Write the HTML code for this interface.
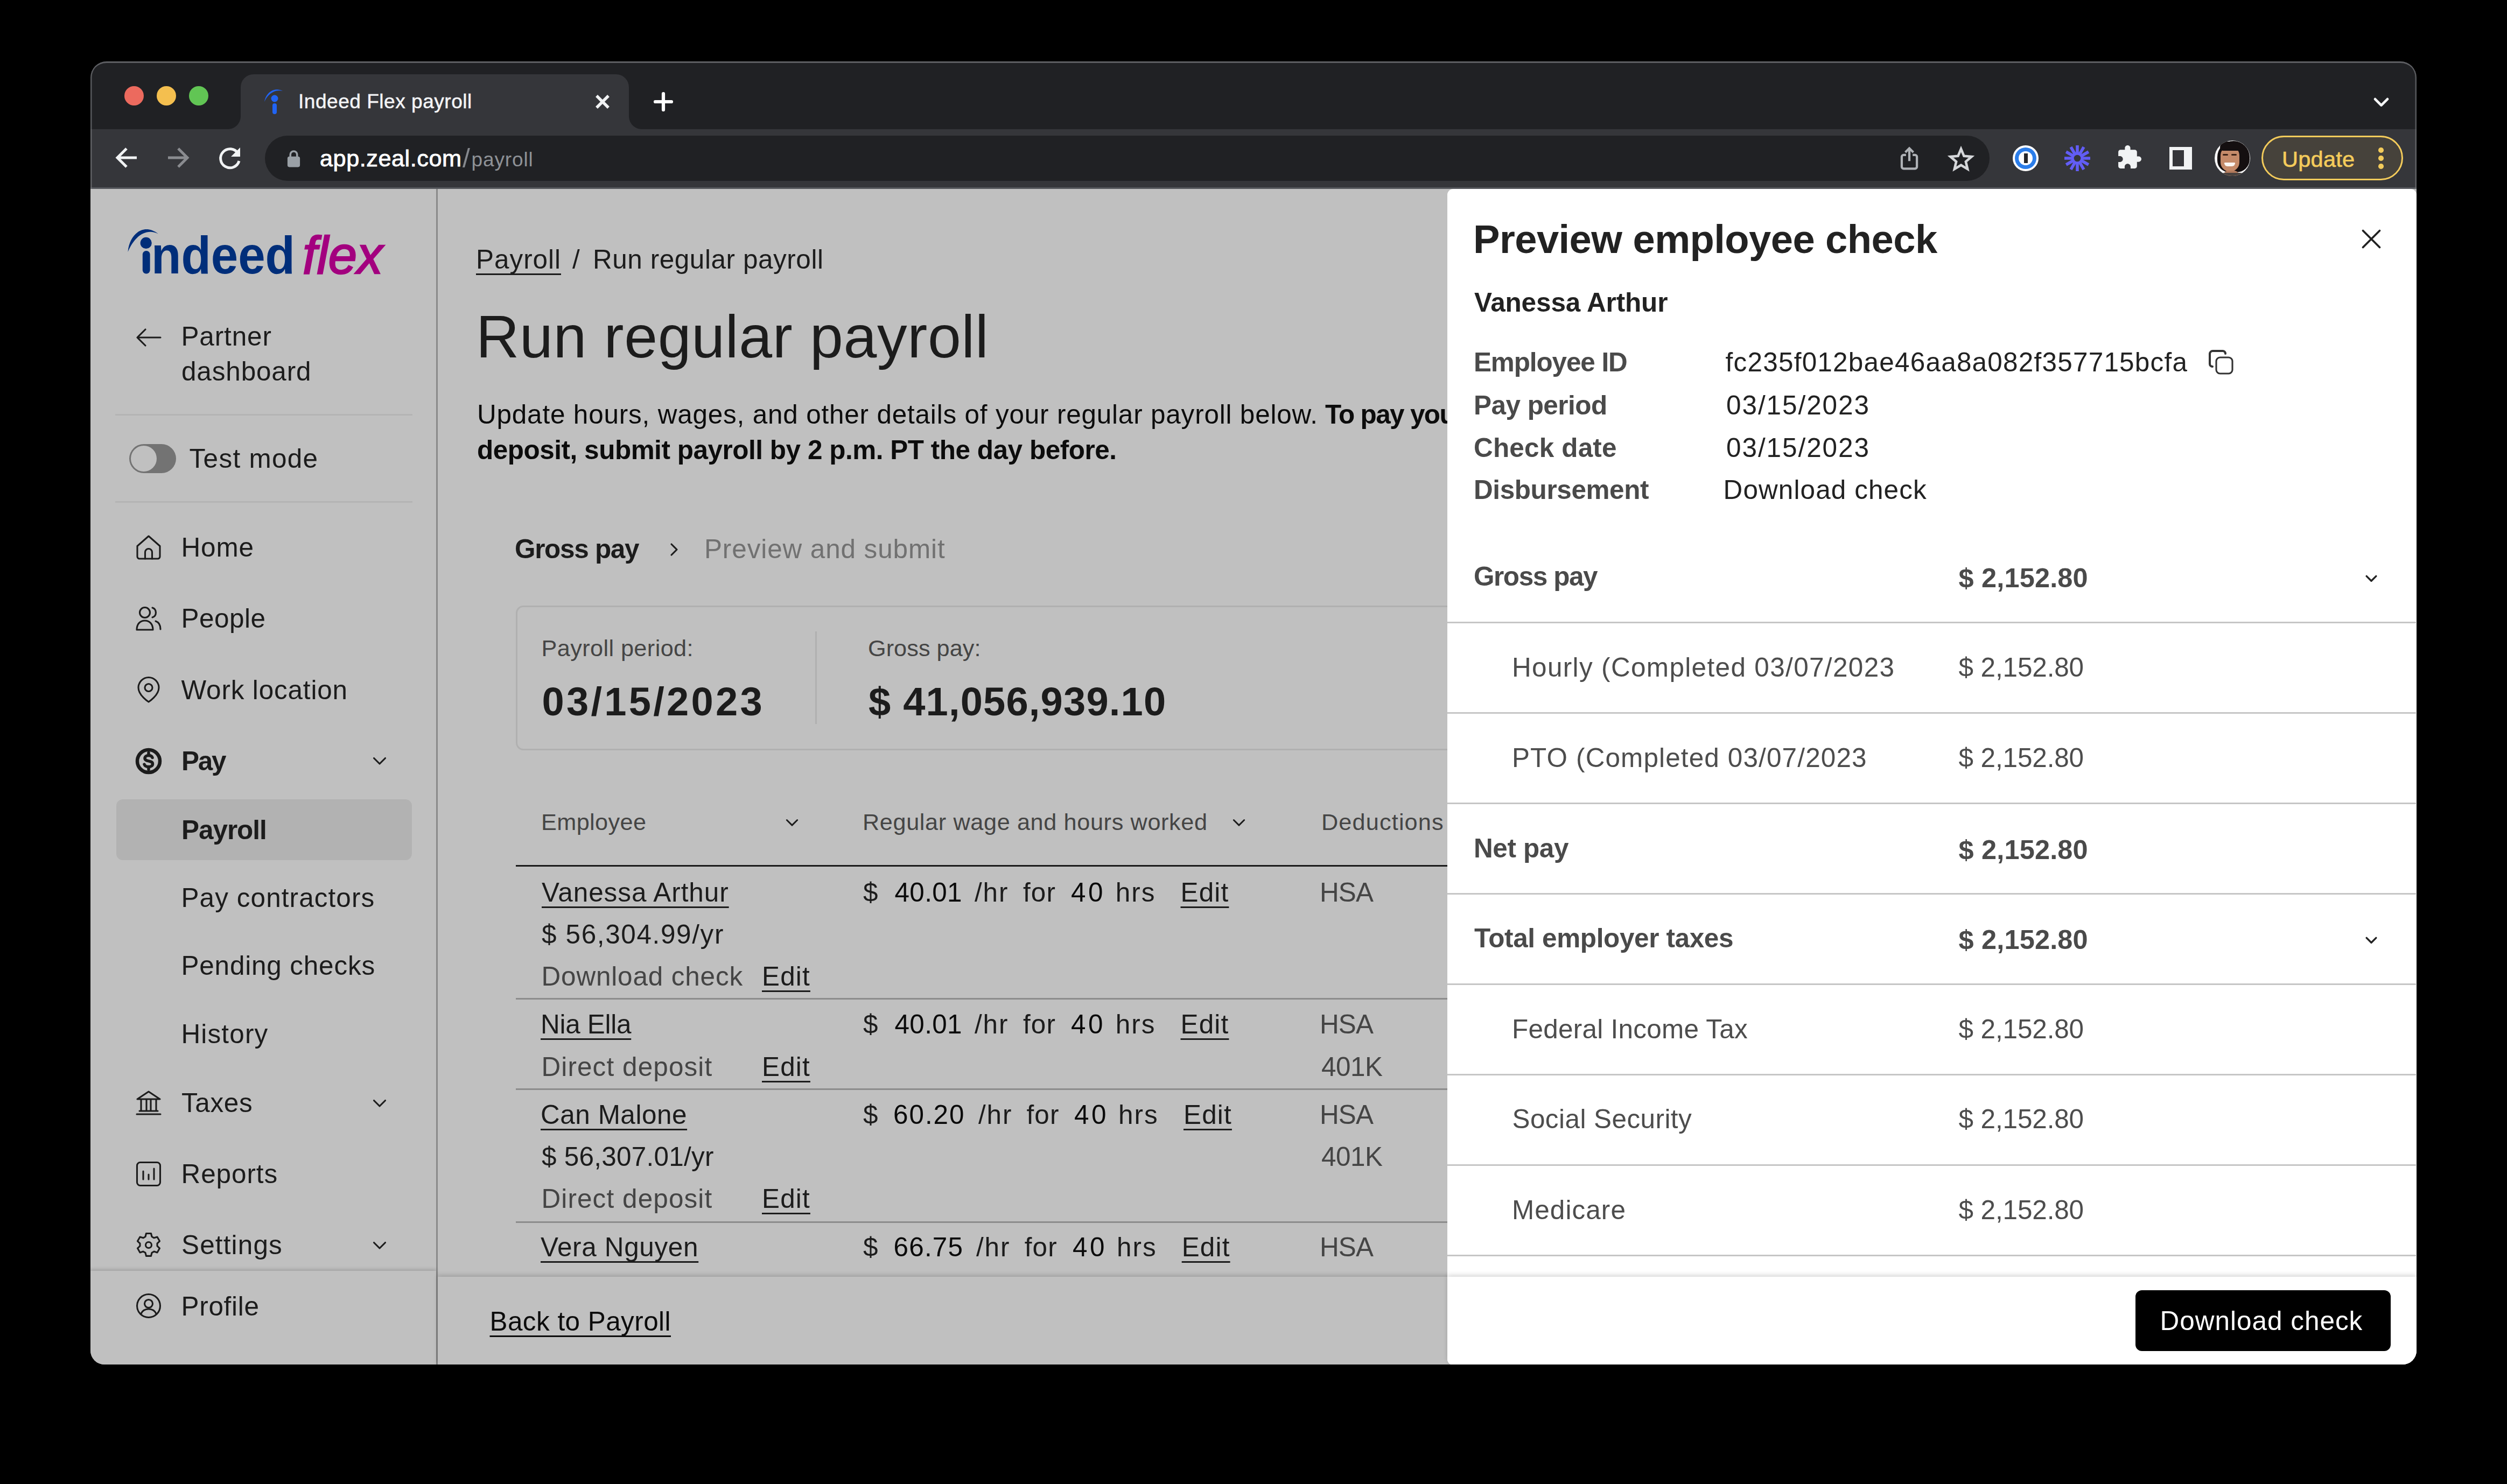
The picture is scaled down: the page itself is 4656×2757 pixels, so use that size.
<!DOCTYPE html>
<html><head><meta charset="utf-8"><title>Indeed Flex payroll</title>
<style>
*{box-sizing:border-box;margin:0;padding:0}
html,body{width:4656px;height:2757px;background:#000;overflow:hidden}
body{font-family:"Liberation Sans",sans-serif;position:relative}
#win{position:absolute;left:0;top:0;width:4656px;height:2757px;clip-path:inset(114px 168px 222px 168px round 30px 30px 26px 26px)}
#win>*{position:absolute}
.t{position:absolute;white-space:nowrap;line-height:1;z-index:10}
.a{position:absolute}
.ln{position:absolute;z-index:5}
svg{position:absolute;overflow:visible}
.ic{fill:none;stroke:#1c1c1c;stroke-width:3.1;stroke-linecap:round;stroke-linejoin:round}

</style></head>
<body>
<div id="win">
<!-- ============ browser chrome ============ -->
<div class="a" style="left:168px;top:114px;width:4320px;height:126px;background:#202124"></div>
<div class="a" style="left:168px;top:240px;width:4320px;height:108px;background:#35363a"></div>
<div class="a" style="left:168px;top:348px;width:4320px;height:3px;background:#55575c"></div>
<!-- active tab -->
<div class="a" style="left:447px;top:138px;width:721px;height:102px;background:#35363a;border-radius:24px 24px 0 0"></div>
<div class="a" style="left:423px;top:216px;width:24px;height:24px;background:radial-gradient(circle at 0 0,#202124 23.5px,#35363a 24.5px)"></div>
<div class="a" style="left:1168px;top:216px;width:24px;height:24px;background:radial-gradient(circle at 100% 0,#202124 23.5px,#35363a 24.5px)"></div>
<!-- traffic lights -->
<div class="a" style="left:231px;top:160px;width:36px;height:36px;border-radius:50%;background:#ec6a5e"></div>
<div class="a" style="left:291px;top:160px;width:36px;height:36px;border-radius:50%;background:#f4bf4f"></div>
<div class="a" style="left:351px;top:160px;width:36px;height:36px;border-radius:50%;background:#61c554"></div>
<!-- favicon -->
<svg style="left:486px;top:162px" width="48" height="56" viewBox="0 0 48 56">
  <path d="M5 27 C8 9 24 -1 39 7 C26 4 13 10 5 27Z" fill="#2164f3"/>
  <circle cx="24" cy="21" r="6.5" fill="#2164f3"/>
  <rect x="20" y="30" width="8" height="20" rx="4" fill="#2164f3"/>
</svg>
<!-- tab close / plus / chevron -->
<svg style="left:1105px;top:175px" width="28" height="28" viewBox="0 0 28 28"><path d="M3 3L25 25M25 3L3 25" stroke="#f1f3f4" stroke-width="5.400" fill="none"/></svg>
<svg style="left:1214px;top:171px" width="36" height="36" viewBox="0 0 36 36"><path d="M18 3V33M3 18H33" stroke="#fff" stroke-width="6.200" stroke-linecap="round" fill="none"/></svg>
<svg style="left:4408px;top:181px" width="29" height="19" viewBox="0 0 34 22"><path d="M3.500 3.500L17 17L30.500 3.500" stroke="#f4f5f6" stroke-width="5.500" stroke-linecap="round" stroke-linejoin="round" fill="none"/></svg>
<!-- nav arrows -->
<svg style="left:214px;top:274px" width="42" height="38" viewBox="0 0 42 38"><path d="M40 19H5M21 2L4 19L21 36" stroke="#f1f3f4" stroke-width="5" fill="none"/></svg>
<svg style="left:310px;top:274px" width="42" height="38" viewBox="0 0 42 38"><path d="M2 19H37M21 2L38 19L21 36" stroke="#8a8c90" stroke-width="5" fill="none"/></svg>
<svg style="left:405px;top:272px" width="44" height="44" viewBox="0 0 44 44"><path d="M37 13 A17.5 17.5 0 1 0 39 27" stroke="#f1f3f4" stroke-width="5" fill="none"/><path d="M41 2V19H24Z" fill="#f1f3f4"/></svg>
<!-- url bar -->
<div class="a" style="left:492px;top:252px;width:3203px;height:84px;border-radius:42px;background:#202124"></div>
<svg style="left:533px;top:279px" width="25" height="32.500" viewBox="0 0 28 36"><rect x="1" y="13" width="26" height="22" rx="4" fill="#9aa0a6"/><path d="M7 14V9a7 7 0 0 1 14 0V14" stroke="#9aa0a6" stroke-width="4" fill="none"/></svg>
<!-- share -->
<svg style="left:3529px;top:272px" width="34" height="44" viewBox="0 0 38 50"><path d="M12 18H7a4 4 0 0 0-4 4V43a4 4 0 0 0 4 4H31a4 4 0 0 0 4-4V22a4 4 0 0 0-4-4H26" stroke="#aeb1b5" stroke-width="4.800" fill="none"/><path d="M19 31V5M10.500 12.500L19 4L27.500 12.500" stroke="#aeb1b5" stroke-width="4.800" fill="none"/></svg>
<!-- star -->
<svg style="left:3620px;top:273px" width="44" height="42" viewBox="0 0 48 46"><path d="M24 4L30 18.500L45.500 19.800L33.700 30L37.300 45L24 37L10.700 45L14.300 30L2.500 19.800L18 18.500Z" stroke="#d5d7da" stroke-width="5" fill="none" stroke-linejoin="miter"/></svg>
<!-- 1password -->
<div class="a" style="left:3738px;top:270px;width:48px;height:48px;border-radius:50%;background:#fff"></div>
<div class="a" style="left:3742px;top:274px;width:40px;height:40px;border-radius:50%;background:#2b7de9"></div>
<div class="a" style="left:3749px;top:281px;width:26px;height:26px;border-radius:50%;background:#fff"></div>
<div class="a" style="left:3758.500px;top:285px;width:7px;height:18px;background:#26272b"></div>
<!-- loom-like asterisk -->
<svg style="left:3833px;top:269px" width="50" height="50" viewBox="-25 -25 50 50">
 <g stroke="#625df5" stroke-width="5.600" stroke-linecap="butt">
  <path d="M0-24V24M-24 0H24M-12-20.800L12 20.800M12-20.800L-12 20.800M-20.800-12L20.800 12M-20.800 12L20.800-12"/>
 </g>
 <circle r="10.500" fill="#625df5"/><circle r="6.300" fill="#35363a"/>
</svg>
<!-- puzzle -->
<svg style="left:3930px;top:268px" width="49" height="49" viewBox="0 0 24 24"><path d="M20.5 11H19V7c0-1.1-.9-2-2-2h-4V3.5C13 2.12 11.88 1 10.500 1S8 2.12 8 3.5V5H4c-1.1 0-1.99.9-1.990 2v3.8H3.500c1.490 0 2.700 1.210 2.700 2.700s-1.210 2.700-2.700 2.700H2V20c0 1.100.900 2 2 2h3.800v-1.500c0-1.490 1.210-2.700 2.700-2.700 1.490 0 2.700 1.210 2.700 2.700V22H17c1.100 0 2-.900 2-2v-4h1.500c1.380 0 2.500-1.120 2.500-2.500S21.880 11 20.500 11z" fill="#f1f3f4"/></svg>
<!-- side panel icon -->
<div class="a" style="left:4029px;top:273px;width:42px;height:42px;background:#f1f3f4"></div>
<div class="a" style="left:4035px;top:279px;width:21px;height:30px;background:#35363a"></div>
<!-- avatar -->
<div class="a" style="left:4113px;top:261px;width:66px;height:66px;border-radius:50%;background:#f7f7f7;overflow:hidden">
  <div class="a" style="left:5px;top:1px;width:60px;height:58px;border-radius:30px 30px 24px 22px;background:#140f10"></div>
  <div class="a" style="left:11px;top:11px;width:35px;height:47px;border-radius:17px 17px 18px 18px;background:#c48a69"></div>
  <div class="a" style="left:10px;top:2px;width:40px;height:17px;border-radius:20px 20px 12px 12px;background:#140f10"></div>
  <div class="a" style="left:15px;top:25px;width:10px;height:3px;background:#3d2418;border-radius:2px"></div>
  <div class="a" style="left:31px;top:25px;width:10px;height:3px;background:#3d2418;border-radius:2px"></div>
  <div class="a" style="left:18px;top:41px;width:20px;height:7px;border-radius:2px 2px 10px 10px;background:#fbf6f2"></div>
  <div class="a" style="left:16px;top:56px;width:30px;height:12px;border-radius:10px 10px 0 0;background:#b37a5c"></div>
  <div class="a" style="left:8px;top:60px;width:50px;height:10px;border-radius:14px 14px 0 0;background:#4a4340"></div>
</div>
<!-- update pill -->
<div class="a" style="left:4200px;top:252px;width:263px;height:83px;border-radius:42px;border:3px solid #f3cb5b;background:#46423b"></div>
<div class="a" style="left:4417px;top:274px;width:9.500px;height:9.500px;border-radius:50%;background:#f3cb5b"></div>
<div class="a" style="left:4417px;top:289px;width:9.500px;height:9.500px;border-radius:50%;background:#f3cb5b"></div>
<div class="a" style="left:4417px;top:304px;width:9.500px;height:9.500px;border-radius:50%;background:#f3cb5b"></div>

<!-- ============ page (dimmed) ============ -->
<div class="a" style="left:168px;top:351px;width:4320px;height:2185px;background:#c0c0c0"></div>
<!-- sidebar divider -->
<div class="ln" style="left:810px;top:351px;width:3px;height:2185px;background:#8a8a8a"></div>

<!-- logo -->
<svg style="left:200px;top:390px" width="560" height="150" viewBox="200 390 560 150">
  <path d="M237.5 468 C240 436 266 413 293.800 434.500 C272 423.500 250 438 237.500 468Z" fill="#002e7a"/>
  <circle cx="271.200" cy="451.400" r="10.600" fill="#002e7a"/>
  <rect x="264.800" y="466" width="13.800" height="42.500" rx="6.500" fill="#002e7a"/>
  <text x="281" y="508" font-family="Liberation Sans, sans-serif" font-weight="700" font-size="98" textLength="267" lengthAdjust="spacingAndGlyphs" fill="#002e7a">ndeed</text>
  <text x="562" y="508" font-family="Liberation Sans, sans-serif" font-style="italic" font-weight="400" font-size="98" textLength="149" lengthAdjust="spacingAndGlyphs" fill="#a3007f" stroke="#a3007f" stroke-width="2.600">flex</text>
</svg>

<!-- partner arrow -->
<svg style="left:252px;top:609px" width="48" height="36" viewBox="0 0 48 36"><path class="ic" d="M46 18H3M18 3L3 18L18 33" stroke-width="3.100"/></svg>
<div class="ln" style="left:214px;top:769px;width:552px;height:3px;background:#b4b4b4"></div>
<!-- toggle -->
<div class="a" style="left:240px;top:825px;width:87px;height:54px;border-radius:27px;background:#737373"></div>
<div class="a" style="left:243px;top:828px;width:48px;height:48px;border-radius:50%;background:#c0c0c0"></div>
<div class="ln" style="left:214px;top:931px;width:552px;height:3px;background:#b4b4b4"></div>

<!-- nav icons (48px box, x=252) -->
<!-- home -->
<svg style="left:252px;top:993px" width="48" height="48" viewBox="0 0 48 48"><path class="ic" d="M3 21.500L24 3L45 21.500V41a4 4 0 0 1-4 4H7a4 4 0 0 1-4-4Z"/><path class="ic" d="M17.500 45V33a6.500 6.500 0 0 1 13 0V45"/></svg>
<!-- people -->
<svg style="left:252px;top:1125px" width="48" height="48" viewBox="0 0 48 48"><circle class="ic" cx="17" cy="13" r="9.500"/><path class="ic" d="M2 45c0-11 6.500-17 15-17s15 6 15 17Z"/><path class="ic" d="M31 4a9.500 9.500 0 0 1 0 18"/><path class="ic" d="M37 29c6 2 9 7 9 15"/></svg>
<!-- map pin -->
<svg style="left:252px;top:1257px" width="48" height="50" viewBox="0 0 48 50"><path class="ic" d="M24 47C24 47 43 35 43 20.500A19 19 0 0 0 5 20.500C5 35 24 47 24 47Z"/><circle class="ic" cx="24" cy="20.500" r="7"/></svg>
<!-- pay (bold) -->
<svg style="left:251px;top:1389px" width="50" height="50" viewBox="0 0 50 50"><circle cx="25" cy="25" r="21" fill="none" stroke="#1c1c1c" stroke-width="6.500"/><path d="M32 18.500C31 15.500 28.500 14.500 25 14.500c-4 0-7 2-7 5.200 0 7 14.500 3.300 14.500 10.500 0 3.300-3 5.300-7.500 5.300-4 0-7-1.500-8-4.500M25 9.500V14M25 36V40.500" fill="none" stroke="#1c1c1c" stroke-width="5.500" stroke-linecap="round"/></svg>
<svg style="left:692px;top:1406px" width="26" height="16" viewBox="0 0 26 16"><path class="ic" d="M2.500 2.500L13 13L23.500 2.500" stroke-width="3.100"/></svg>
<!-- selected -->
<div class="a" style="left:216px;top:1485px;width:549px;height:113px;border-radius:12px;background:#b2b2b2"></div>
<!-- taxes (bank) -->
<svg style="left:252px;top:2025px" width="48" height="48" viewBox="0 0 48 48"><path class="ic" d="M3 17L24 3L45 17Z" stroke-width="3.100"/><path class="ic" d="M2 45H46M7 39H41M10 18V38M20 18V38M28 18V38M38 18V38" stroke-width="3.100"/></svg>
<svg style="left:692px;top:2042px" width="26" height="16" viewBox="0 0 26 16"><path class="ic" d="M2.500 2.500L13 13L23.500 2.500" stroke-width="3.100"/></svg>
<!-- reports -->
<svg style="left:252px;top:2157px" width="48" height="48" viewBox="0 0 48 48"><rect class="ic" x="2.500" y="2.500" width="43" height="43" rx="6" stroke-width="3.100"/><path class="ic" d="M14 19V34M24 25V34M34 14V34" stroke-width="3.100"/></svg>
<!-- settings gear -->
<svg style="left:252px;top:2289px" width="48" height="48" viewBox="-24 -24 48 48">
<path class="ic" stroke-width="4" d="M-4.500-21.500h9l1.500 6 4 2.300 6-1.800 4.500 7.800-4.500 4.300v4.700l4.500 4.300-4.500 7.800-6-1.800-4 2.300-1.500 6h-9l-1.500-6-4-2.300-6 1.800-4.500-7.800 4.500-4.300v-4.700l-4.500-4.300 4.500-7.800 6 1.800 4-2.300Z"/><circle class="ic" r="5.500" stroke-width="3.100"/></svg>
<svg style="left:692px;top:2306px" width="26" height="16" viewBox="0 0 26 16"><path class="ic" d="M2.500 2.500L13 13L23.500 2.500" stroke-width="3.100"/></svg>
<!-- sidebar footer -->
<div class="a" style="left:168px;top:2361px;width:642px;height:175px;background:#c0c0c0;box-shadow:0 -3px 6px rgba(0,0,0,.16);z-index:20"></div>
<svg style="left:252px;top:2402px;z-index:21" width="48" height="48" viewBox="0 0 48 48"><circle class="ic" cx="24" cy="24" r="21.500" stroke-width="3.100"/><circle class="ic" cx="24" cy="20" r="7.500" stroke-width="3.100"/><path class="ic" d="M9.500 39.500C12 33 17 30 24 30s12 3 14.500 9.500" stroke-width="3.100"/></svg>

<!-- ============ main content shapes ============ -->
<svg style="left:1244px;top:1008px" width="16" height="26" viewBox="0 0 16 26"><path class="ic" d="M3 3L13 13L3 23" stroke-width="3.500"/></svg>
<div class="a" style="left:958px;top:1125px;width:1800px;height:269px;border:3px solid #b0b0b0;border-radius:14px"></div>
<div class="ln" style="left:1514px;top:1173px;width:3px;height:172px;background:#b0b0b0"></div>
<svg style="left:1459px;top:1521px" width="24" height="15" viewBox="0 0 26 16"><path class="ic" d="M2.500 2.500L13 13L23.500 2.500" stroke-width="3.100"/></svg>
<svg style="left:2289px;top:1521px" width="24" height="15" viewBox="0 0 26 16"><path class="ic" d="M2.500 2.500L13 13L23.500 2.500" stroke-width="3.100"/></svg>
<div class="ln" style="left:958px;top:1607px;width:1800px;height:3px;background:#1a1a1a"></div>
<div class="ln" style="left:958px;top:1854px;width:1800px;height:3px;background:#8c8c8c"></div>
<div class="ln" style="left:958px;top:2022px;width:1800px;height:3px;background:#8c8c8c"></div>
<div class="ln" style="left:958px;top:2269px;width:1800px;height:3px;background:#8c8c8c"></div>
<!-- main footer -->
<div class="a" style="left:813px;top:2372px;width:1900px;height:164px;background:#c0c0c0;box-shadow:0 -3px 8px rgba(0,0,0,.18);z-index:20"></div>

<!-- ============ right panel ============ -->
<div class="a" style="left:2688px;top:351px;width:1800px;height:2185px;background:#fff;border-radius:11px;z-index:40"></div>
<svg style="left:4386px;top:426px;z-index:50" width="36" height="36" viewBox="0 0 36 36"><path d="M2.500 2.500L33.500 33.500M33.500 2.500L2.500 33.500" stroke="#222" stroke-width="3.800" stroke-linecap="round" fill="none"/></svg>
<!-- copy icon -->
<svg style="left:4101px;top:649px;z-index:50" width="48" height="48" viewBox="0 0 48 48"><rect x="15" y="15" width="30" height="30" rx="7" fill="#fff" stroke="#333" stroke-width="3.100"/><path d="M8 32H7.500A5 5 0 0 1 3 27V8.500A5.500 5.500 0 0 1 8.500 3H27a5 5 0 0 1 5 4.500V8" fill="none" stroke="#333" stroke-width="4" stroke-linecap="round"/></svg>
<!-- chevrons -->
<svg style="left:4393px;top:1068px;z-index:50" width="22" height="14" viewBox="0 0 26 16"><path d="M2.500 2.500L13 13L23.500 2.500" fill="none" stroke="#222" stroke-width="4" stroke-linecap="round" stroke-linejoin="round"/></svg>
<svg style="left:4393px;top:1740px;z-index:50" width="22" height="14" viewBox="0 0 26 16"><path d="M2.500 2.500L13 13L23.500 2.500" fill="none" stroke="#222" stroke-width="4" stroke-linecap="round" stroke-linejoin="round"/></svg>
<!-- row lines -->
<div class="ln" style="left:2688px;top:1155px;width:1799px;height:3px;background:#c6c6c6;z-index:45"></div>
<div class="ln" style="left:2688px;top:1323px;width:1799px;height:3px;background:#c6c6c6;z-index:45"></div>
<div class="ln" style="left:2688px;top:1491px;width:1799px;height:3px;background:#c6c6c6;z-index:45"></div>
<div class="ln" style="left:2688px;top:1659px;width:1799px;height:3px;background:#c6c6c6;z-index:45"></div>
<div class="ln" style="left:2688px;top:1827px;width:1799px;height:3px;background:#c6c6c6;z-index:45"></div>
<div class="ln" style="left:2688px;top:1995px;width:1799px;height:3px;background:#c6c6c6;z-index:45"></div>
<div class="ln" style="left:2688px;top:2163px;width:1799px;height:3px;background:#c6c6c6;z-index:45"></div>
<div class="ln" style="left:2688px;top:2331px;width:1799px;height:3px;background:#c6c6c6;z-index:45"></div>
<!-- panel footer -->
<div class="a" style="left:2688px;top:2372px;width:1800px;height:164px;background:#fff;box-shadow:0 -3px 8px rgba(0,0,0,.16);z-index:60;border-radius:0 0 11px 11px"></div>
<div class="a" style="left:3966px;top:2397px;width:474px;height:113px;background:#000;border-radius:12px;z-index:65"></div>
<!-- window edge highlight -->
<div class="a" style="left:168px;top:114px;width:4320px;height:237px;border-radius:30px 30px 0 0;box-shadow:inset 0 3px 0 #5d5e62, inset 2.500px 0 0 rgba(125,126,130,.6), inset -2.500px 0 0 rgba(125,126,130,.6);z-index:90;pointer-events:none"></div>

<div class="t" style="left:554.0px;top:169.6px;font-size:37.08px;color:#f3f4f6;letter-spacing:0.50px;-webkit-text-stroke:0.5px #f3f4f6;">Indeed Flex payroll</div>
<div class="t" style="left:594.0px;top:272.9px;font-size:43.26px;color:#ffffff;letter-spacing:0.53px;-webkit-text-stroke:0.9px #fff;">app.zeal.com</div>
<div class="t" style="left:859.0px;top:268.7px;font-size:50.00px;color:#85888d;">/</div>
<div class="t" style="left:875.5px;top:278.1px;font-size:37.08px;color:#8e9196;letter-spacing:0.84px;">payroll</div>
<div class="t" style="left:4238.0px;top:274.9px;font-size:41.50px;color:#f3cb5b;letter-spacing:0.25px;-webkit-text-stroke:0.7px #f3cb5b;">Update</div>
<div class="t" style="left:336.5px;top:599.6px;font-size:49.44px;color:#1c1c1c;letter-spacing:0.89px;">Partner</div>
<div class="t" style="left:337.0px;top:665.1px;font-size:49.44px;color:#1c1c1c;letter-spacing:0.86px;">dashboard</div>
<div class="t" style="left:351.6px;top:827.1px;font-size:49.44px;color:#1c1c1c;letter-spacing:1.30px;">Test mode</div>
<div class="t" style="left:336.5px;top:991.8px;font-size:49.44px;color:#1c1c1c;letter-spacing:0.87px;">Home</div>
<div class="t" style="left:336.5px;top:1124.1px;font-size:49.44px;color:#1c1c1c;letter-spacing:0.51px;">People</div>
<div class="t" style="left:336.5px;top:1256.5px;font-size:49.44px;color:#1c1c1c;letter-spacing:0.83px;">Work location</div>
<div class="t" style="left:337.0px;top:1388.6px;font-size:49.44px;color:#1c1c1c;font-weight:700;letter-spacing:-2.23px;">Pay</div>
<div class="t" style="left:337.0px;top:1516.7px;font-size:49.44px;color:#1c1c1c;font-weight:700;letter-spacing:-1.02px;">Payroll</div>
<div class="t" style="left:336.5px;top:1643.1px;font-size:49.44px;color:#1c1c1c;letter-spacing:1.09px;">Pay contractors</div>
<div class="t" style="left:336.5px;top:1769.1px;font-size:49.44px;color:#1c1c1c;letter-spacing:0.82px;">Pending checks</div>
<div class="t" style="left:336.5px;top:1895.7px;font-size:49.44px;color:#1c1c1c;letter-spacing:1.15px;">History</div>
<div class="t" style="left:337.0px;top:2024.1px;font-size:49.44px;color:#1c1c1c;letter-spacing:0.64px;">Taxes</div>
<div class="t" style="left:336.5px;top:2156.1px;font-size:49.44px;color:#1c1c1c;letter-spacing:0.94px;">Reports</div>
<div class="t" style="left:337.0px;top:2288.1px;font-size:49.44px;color:#1c1c1c;letter-spacing:1.16px;">Settings</div>
<div class="t" style="left:336.5px;top:2401.6px;font-size:49.44px;color:#1c1c1c;letter-spacing:0.73px;z-index:30;">Profile</div>
<div class="t" style="left:884.0px;top:457.1px;font-size:49.44px;color:#1c1c1c;letter-spacing:0.98px;text-decoration:underline;text-decoration-thickness:3.4px;text-underline-offset:9.4px;text-decoration-skip-ink:none;">Payroll</div>
<div class="t" style="left:1063.0px;top:457.1px;font-size:49.44px;color:#1c1c1c;">/</div>
<div class="t" style="left:1101.0px;top:457.1px;font-size:49.44px;color:#1c1c1c;letter-spacing:0.57px;">Run regular payroll</div>
<div class="t" style="left:884.0px;top:569.8px;font-size:111.24px;color:#1c1c1c;letter-spacing:0.66px;">Run regular payroll</div>
<div class="t" style="left:886.0px;top:745.1px;font-size:49.44px;color:#0c0c0c;letter-spacing:0.81px;">Update hours, wages, and other details of your regular payroll below.</div>
<div class="t" style="left:2461.0px;top:745.1px;font-size:49.44px;color:#0c0c0c;font-weight:700;letter-spacing:-1.63px;">To pay your</div>
<div class="t" style="left:886.0px;top:811.1px;font-size:49.44px;color:#0c0c0c;font-weight:700;letter-spacing:-0.46px;">deposit, submit payroll by 2 p.m. PT the day before.</div>
<div class="t" style="left:956.0px;top:995.1px;font-size:49.44px;color:#1c1c1c;font-weight:700;letter-spacing:-1.29px;">Gross pay</div>
<div class="t" style="left:1308.0px;top:995.1px;font-size:49.44px;color:#717171;letter-spacing:0.90px;">Preview and submit</div>
<div class="t" style="left:1005.5px;top:1183.4px;font-size:43.26px;color:#454545;letter-spacing:0.40px;">Payroll period:</div>
<div class="t" style="left:1006.5px;top:1267.2px;font-size:74.16px;color:#1c1c1c;font-weight:700;letter-spacing:4.23px;">03/15/2023</div>
<div class="t" style="left:1612.0px;top:1183.4px;font-size:43.26px;color:#454545;letter-spacing:0.04px;">Gross pay:</div>
<div class="t" style="left:1613.0px;top:1267.2px;font-size:74.16px;color:#1c1c1c;font-weight:700;letter-spacing:1.15px;">$ 41,056,939.10</div>
<div class="t" style="left:1005.0px;top:1506.4px;font-size:43.26px;color:#454545;letter-spacing:0.39px;">Employee</div>
<div class="t" style="left:1602.0px;top:1506.4px;font-size:43.26px;color:#454545;letter-spacing:0.62px;">Regular wage and hours worked</div>
<div class="t" style="left:2454.0px;top:1506.4px;font-size:43.26px;color:#454545;letter-spacing:1.14px;">Deductions</div>
<div class="t" style="left:1006.0px;top:1633.1px;font-size:49.44px;color:#1c1c1c;letter-spacing:0.95px;text-decoration:underline;text-decoration-thickness:3.4px;text-underline-offset:9.4px;text-decoration-skip-ink:none;">Vanessa Arthur</div>
<div class="t" style="left:1006.0px;top:1711.1px;font-size:49.44px;color:#1c1c1c;letter-spacing:1.64px;">$ 56,304.99/yr</div>
<div class="t" style="left:1005.5px;top:1789.1px;font-size:49.44px;color:#454545;letter-spacing:0.84px;">Download check</div>
<div class="t" style="left:1415.0px;top:1789.1px;font-size:49.44px;color:#1c1c1c;letter-spacing:1.18px;text-decoration:underline;text-decoration-thickness:3.4px;text-underline-offset:9.4px;text-decoration-skip-ink:none;">Edit</div>
<div class="t" style="left:1603.0px;top:1633.1px;font-size:49.44px;color:#1c1c1c;">$</div>
<div class="t" style="left:1661.5px;top:1633.1px;font-size:49.44px;color:#0a0a0a;letter-spacing:0.32px;">40.01</div>
<div class="t" style="left:1810.0px;top:1633.1px;font-size:49.44px;color:#1c1c1c;letter-spacing:1.88px;">/hr</div>
<div class="t" style="left:1900.0px;top:1633.1px;font-size:49.44px;color:#1c1c1c;letter-spacing:1.13px;">for</div>
<div class="t" style="left:1989.0px;top:1633.1px;font-size:49.44px;color:#0a0a0a;letter-spacing:4.51px;">40</div>
<div class="t" style="left:2071.7px;top:1633.1px;font-size:49.44px;color:#1c1c1c;letter-spacing:2.02px;">hrs</div>
<div class="t" style="left:2192.5px;top:1633.1px;font-size:49.44px;color:#1c1c1c;letter-spacing:1.18px;text-decoration:underline;text-decoration-thickness:3.4px;text-underline-offset:9.4px;text-decoration-skip-ink:none;">Edit</div>
<div class="t" style="left:2451.0px;top:1633.1px;font-size:49.44px;color:#454545;letter-spacing:-0.84px;">HSA</div>
<div class="t" style="left:1004.0px;top:1878.1px;font-size:49.44px;color:#1c1c1c;letter-spacing:-0.27px;text-decoration:underline;text-decoration-thickness:3.4px;text-underline-offset:9.4px;text-decoration-skip-ink:none;">Nia Ella</div>
<div class="t" style="left:1005.5px;top:1956.6px;font-size:49.44px;color:#454545;letter-spacing:1.11px;">Direct deposit</div>
<div class="t" style="left:1415.0px;top:1956.6px;font-size:49.44px;color:#1c1c1c;letter-spacing:1.18px;text-decoration:underline;text-decoration-thickness:3.4px;text-underline-offset:9.4px;text-decoration-skip-ink:none;">Edit</div>
<div class="t" style="left:1603.0px;top:1878.1px;font-size:49.44px;color:#1c1c1c;">$</div>
<div class="t" style="left:1661.5px;top:1878.1px;font-size:49.44px;color:#0a0a0a;letter-spacing:0.32px;">40.01</div>
<div class="t" style="left:1810.0px;top:1878.1px;font-size:49.44px;color:#1c1c1c;letter-spacing:1.88px;">/hr</div>
<div class="t" style="left:1900.0px;top:1878.1px;font-size:49.44px;color:#1c1c1c;letter-spacing:1.13px;">for</div>
<div class="t" style="left:1989.0px;top:1878.1px;font-size:49.44px;color:#0a0a0a;letter-spacing:4.51px;">40</div>
<div class="t" style="left:2071.7px;top:1878.1px;font-size:49.44px;color:#1c1c1c;letter-spacing:2.02px;">hrs</div>
<div class="t" style="left:2192.5px;top:1878.1px;font-size:49.44px;color:#1c1c1c;letter-spacing:1.18px;text-decoration:underline;text-decoration-thickness:3.4px;text-underline-offset:9.4px;text-decoration-skip-ink:none;">Edit</div>
<div class="t" style="left:2451.0px;top:1878.1px;font-size:49.44px;color:#454545;letter-spacing:-0.84px;">HSA</div>
<div class="t" style="left:2454.0px;top:1956.6px;font-size:49.44px;color:#454545;letter-spacing:-0.49px;">401K</div>
<div class="t" style="left:1004.0px;top:2046.1px;font-size:49.44px;color:#1c1c1c;letter-spacing:0.55px;text-decoration:underline;text-decoration-thickness:3.4px;text-underline-offset:9.4px;text-decoration-skip-ink:none;">Can Malone</div>
<div class="t" style="left:1006.0px;top:2124.1px;font-size:49.44px;color:#1c1c1c;letter-spacing:0.26px;">$ 56,307.01/yr</div>
<div class="t" style="left:1005.5px;top:2202.1px;font-size:49.44px;color:#454545;letter-spacing:1.11px;">Direct deposit</div>
<div class="t" style="left:1415.0px;top:2202.1px;font-size:49.44px;color:#1c1c1c;letter-spacing:1.18px;text-decoration:underline;text-decoration-thickness:3.4px;text-underline-offset:9.4px;text-decoration-skip-ink:none;">Edit</div>
<div class="t" style="left:1603.0px;top:2046.1px;font-size:49.44px;color:#1c1c1c;">$</div>
<div class="t" style="left:1659.0px;top:2046.1px;font-size:49.44px;color:#0a0a0a;letter-spacing:1.95px;">60.20</div>
<div class="t" style="left:1817.0px;top:2046.1px;font-size:49.44px;color:#1c1c1c;letter-spacing:1.88px;">/hr</div>
<div class="t" style="left:1906.5px;top:2046.1px;font-size:49.44px;color:#1c1c1c;letter-spacing:1.13px;">for</div>
<div class="t" style="left:1995.0px;top:2046.1px;font-size:49.44px;color:#0a0a0a;letter-spacing:4.51px;">40</div>
<div class="t" style="left:2077.0px;top:2046.1px;font-size:49.44px;color:#1c1c1c;letter-spacing:2.02px;">hrs</div>
<div class="t" style="left:2198.0px;top:2046.1px;font-size:49.44px;color:#1c1c1c;letter-spacing:1.18px;text-decoration:underline;text-decoration-thickness:3.4px;text-underline-offset:9.4px;text-decoration-skip-ink:none;">Edit</div>
<div class="t" style="left:2451.0px;top:2046.1px;font-size:49.44px;color:#454545;letter-spacing:-0.84px;">HSA</div>
<div class="t" style="left:2454.0px;top:2124.1px;font-size:49.44px;color:#454545;letter-spacing:-0.49px;">401K</div>
<div class="t" style="left:1004.0px;top:2292.1px;font-size:49.44px;color:#1c1c1c;letter-spacing:0.67px;text-decoration:underline;text-decoration-thickness:3.4px;text-underline-offset:9.4px;text-decoration-skip-ink:none;">Vera Nguyen</div>
<div class="t" style="left:1603.0px;top:2292.1px;font-size:49.44px;color:#1c1c1c;">$</div>
<div class="t" style="left:1659.5px;top:2292.1px;font-size:49.44px;color:#0a0a0a;letter-spacing:1.20px;">66.75</div>
<div class="t" style="left:1813.0px;top:2292.1px;font-size:49.44px;color:#1c1c1c;letter-spacing:1.88px;">/hr</div>
<div class="t" style="left:1902.7px;top:2292.1px;font-size:49.44px;color:#1c1c1c;letter-spacing:1.13px;">for</div>
<div class="t" style="left:1992.0px;top:2292.1px;font-size:49.44px;color:#0a0a0a;letter-spacing:4.51px;">40</div>
<div class="t" style="left:2074.0px;top:2292.1px;font-size:49.44px;color:#1c1c1c;letter-spacing:2.02px;">hrs</div>
<div class="t" style="left:2194.7px;top:2292.1px;font-size:49.44px;color:#1c1c1c;letter-spacing:1.18px;text-decoration:underline;text-decoration-thickness:3.4px;text-underline-offset:9.4px;text-decoration-skip-ink:none;">Edit</div>
<div class="t" style="left:2451.0px;top:2292.1px;font-size:49.44px;color:#454545;letter-spacing:-0.84px;">HSA</div>
<div class="t" style="left:909.5px;top:2430.1px;font-size:49.44px;color:#0c0c0c;letter-spacing:0.45px;text-decoration:underline;text-decoration-thickness:3.4px;text-underline-offset:9.4px;text-decoration-skip-ink:none;z-index:30;">Back to Payroll</div>
<div class="t" style="left:2736.0px;top:407.7px;font-size:74.16px;color:#222;font-weight:700;letter-spacing:-0.56px;z-index:50;">Preview employee check</div>
<div class="t" style="left:2738.0px;top:536.6px;font-size:49.44px;color:#222;font-weight:700;letter-spacing:-0.11px;z-index:50;">Vanessa Arthur</div>
<div class="t" style="left:2737.0px;top:648.1px;font-size:49.44px;color:#4a4a4a;font-weight:700;letter-spacing:-1.10px;z-index:50;">Employee ID</div>
<div class="t" style="left:3204.6px;top:648.1px;font-size:49.44px;color:#222;letter-spacing:1.23px;z-index:50;">fc235f012bae46aa8a082f357715bcfa</div>
<div class="t" style="left:2737.0px;top:728.1px;font-size:49.44px;color:#4a4a4a;font-weight:700;letter-spacing:-0.51px;z-index:50;">Pay period</div>
<div class="t" style="left:3206.0px;top:728.1px;font-size:49.44px;color:#222;letter-spacing:1.95px;z-index:50;">03/15/2023</div>
<div class="t" style="left:2737.0px;top:806.7px;font-size:49.44px;color:#4a4a4a;font-weight:700;letter-spacing:0.19px;z-index:50;">Check date</div>
<div class="t" style="left:3206.0px;top:806.7px;font-size:49.44px;color:#222;letter-spacing:1.95px;z-index:50;">03/15/2023</div>
<div class="t" style="left:2737.0px;top:885.1px;font-size:49.44px;color:#4a4a4a;font-weight:700;letter-spacing:-0.38px;z-index:50;">Disbursement</div>
<div class="t" style="left:3200.6px;top:885.1px;font-size:49.44px;color:#222;letter-spacing:1.11px;z-index:50;">Download check</div>
<div class="t" style="left:2737.0px;top:1046.1px;font-size:49.44px;color:#4a4a4a;font-weight:700;letter-spacing:-1.41px;z-index:50;">Gross pay</div>
<div class="t" style="left:3637.6px;top:1049.3px;font-size:50.47px;color:#4a4a4a;font-weight:700;letter-spacing:0.17px;z-index:50;">$ 2,152.80</div>
<div class="t" style="left:2808.0px;top:1215.1px;font-size:49.44px;color:#4d4d4d;letter-spacing:1.36px;z-index:50;">Hourly (Completed 03/07/2023</div>
<div class="t" style="left:3637.6px;top:1215.1px;font-size:49.44px;color:#4d4d4d;letter-spacing:-0.13px;z-index:50;">$ 2,152.80</div>
<div class="t" style="left:2808.0px;top:1383.1px;font-size:49.44px;color:#4d4d4d;letter-spacing:1.14px;z-index:50;">PTO (Completed 03/07/2023</div>
<div class="t" style="left:3637.6px;top:1383.1px;font-size:49.44px;color:#4d4d4d;letter-spacing:-0.13px;z-index:50;">$ 2,152.80</div>
<div class="t" style="left:2737.0px;top:1550.8px;font-size:49.44px;color:#4a4a4a;font-weight:700;letter-spacing:-0.35px;z-index:50;">Net pay</div>
<div class="t" style="left:3637.6px;top:1554.0px;font-size:50.47px;color:#4a4a4a;font-weight:700;letter-spacing:0.17px;z-index:50;">$ 2,152.80</div>
<div class="t" style="left:2738.0px;top:1718.1px;font-size:49.44px;color:#4a4a4a;font-weight:700;letter-spacing:-0.35px;z-index:50;">Total employer taxes</div>
<div class="t" style="left:3637.6px;top:1721.3px;font-size:50.47px;color:#4a4a4a;font-weight:700;letter-spacing:0.17px;z-index:50;">$ 2,152.80</div>
<div class="t" style="left:2808.0px;top:1887.1px;font-size:49.44px;color:#4d4d4d;letter-spacing:0.27px;z-index:50;">Federal Income Tax</div>
<div class="t" style="left:3637.6px;top:1887.1px;font-size:49.44px;color:#4d4d4d;letter-spacing:-0.13px;z-index:50;">$ 2,152.80</div>
<div class="t" style="left:2808.5px;top:2054.1px;font-size:49.44px;color:#4d4d4d;letter-spacing:0.45px;z-index:50;">Social Security</div>
<div class="t" style="left:3637.6px;top:2054.1px;font-size:49.44px;color:#4d4d4d;letter-spacing:-0.13px;z-index:50;">$ 2,152.80</div>
<div class="t" style="left:2808.0px;top:2223.1px;font-size:49.44px;color:#4d4d4d;letter-spacing:1.08px;z-index:50;">Medicare</div>
<div class="t" style="left:3637.6px;top:2223.1px;font-size:49.44px;color:#4d4d4d;letter-spacing:-0.13px;z-index:50;">$ 2,152.80</div>
<div class="t" style="left:4011.6px;top:2428.7px;font-size:49.44px;color:#fff;letter-spacing:1.00px;z-index:70;">Download check</div>
</div>
</body></html>
